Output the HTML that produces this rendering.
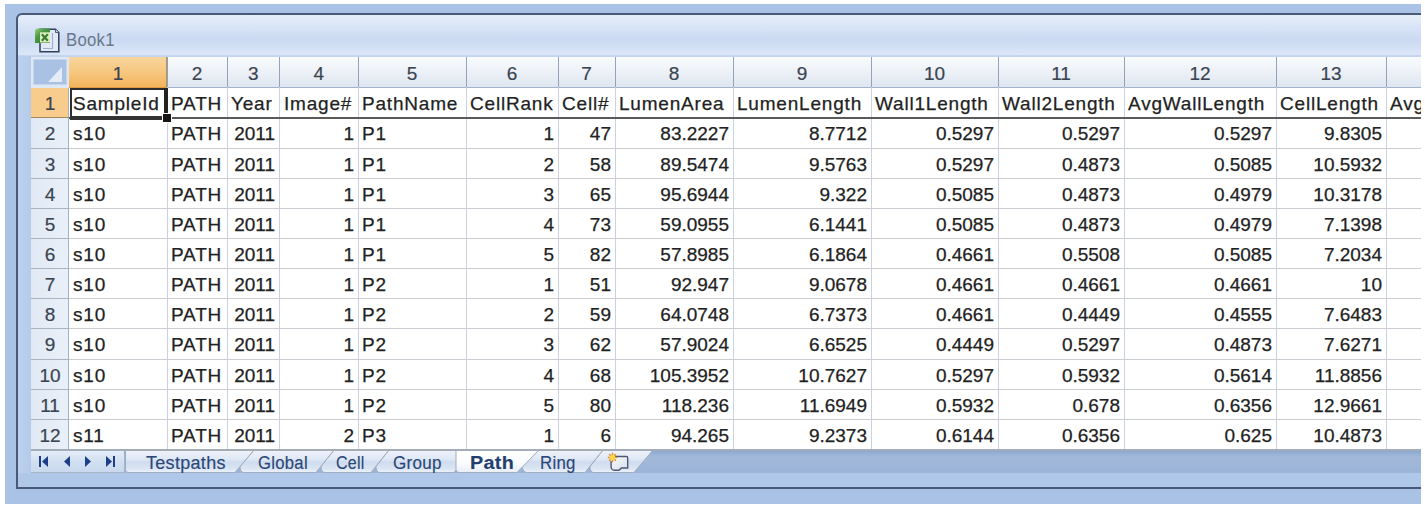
<!DOCTYPE html>
<html><head><meta charset="utf-8"><style>
*{margin:0;padding:0;box-sizing:border-box}
html,body{width:1425px;height:508px;overflow:hidden;background:#fff;font-family:"Liberation Sans",sans-serif}
.a{position:absolute}
.c{position:absolute;font-size:19px;line-height:19px;color:#222;white-space:nowrap;-webkit-text-stroke:0.25px #222}
.t{letter-spacing:0.8px}
.hd{position:absolute;font-size:19px;line-height:19px;color:#3b4451;text-align:center;white-space:nowrap;-webkit-text-stroke:0.2px #3b4451}
.tab{position:absolute;font-size:18px;line-height:18px;color:#2b4775;white-space:nowrap;letter-spacing:0.3px;-webkit-text-stroke:0.15px #2b4775}
</style></head><body>

<div class="a" style="left:5px;top:4px;width:1416px;height:500px;background:#a9c2e5"></div>
<div class="a" style="left:16px;top:13px;width:1420px;height:476px;background:#b9cfec;border:2px solid #48597a;border-radius:6px 0 0 0;box-shadow:inset 1px 1px 0 #d2e1f5"></div>
<div class="a" style="left:17.5px;top:14.5px;width:1410px;height:41px;border-radius:5px 0 0 0;background:linear-gradient(#e6eefa 0%,#d8e4f6 30%,#cbdaf2 60%,#dce7f7 100%)"></div>
<div class="a" style="left:17.5px;top:55px;width:1410px;height:2px;background:#c3d5ee"></div>
<div class="a" style="left:65.5px;top:30.7px;font-size:18px;line-height:18px;color:#6a778c;letter-spacing:0.3px;transform:scaleX(0.93);transform-origin:0 0">Book1</div>
<svg class="a" style="left:30px;top:24px" width="34" height="32" viewBox="0 0 34 32">
<path d="M10 5.2h15.5l3.3 3.3v19.3H10z" fill="#e2eaf6" stroke="#2f3f62" stroke-width="1.5"/>
<path d="M25.5 5.2v3.3h3.3" fill="#c8d6ea" stroke="#2f3f62" stroke-width="0.8"/>
<path d="M22.5 9v15M13 24.5h10" stroke="#9fb2d4" stroke-width="1.2"/>
<defs><linearGradient id="gg" x1="0" y1="0" x2="1" y2="1"><stop offset="0" stop-color="#9fd08a"/><stop offset="0.35" stop-color="#4c9c43"/><stop offset="1" stop-color="#2f6f2b"/></linearGradient></defs>
<path d="M8 4.6h12v14.4H5V7.6a3 3 0 0 1 3-3z" fill="url(#gg)"/>
<rect x="10" y="8.3" width="10" height="10.2" fill="#d9efbd"/>
<path d="M11.8 10.3l6 6.4M17.8 10.3l-6 6.4" stroke="#3a7a33" stroke-width="2.2"/>
</svg>
<div class="a" style="left:31px;top:57px;width:1394px;height:392px;background:#fff"></div>
<div class="a" style="left:69px;top:57px;width:1356px;height:31px;background:linear-gradient(#f9fbfd 0%,#eef2f8 45%,#dfe6f0 100%);border-bottom:1px solid #9fb3cb"></div>
<div class="a" style="left:69px;top:57px;width:98px;height:31px;background:linear-gradient(#f8d59e 0%,#f7c983 45%,#f3b45c 100%);border-bottom:1px solid #e29a3e"></div>
<div class="a" style="left:31px;top:57px;width:38px;height:31px;background:#dee8f5"></div>
<div class="a" style="left:33px;top:59px;width:34px;height:26px;background:#a9c1e2;border:1px solid #c4d5ec"></div>
<svg class="a" style="left:31px;top:57px" width="38" height="30"><path d="M31 10L31 25L17 25Z" fill="#eef3fa" opacity="0.85"/></svg>
<div class="hd" style="left:69px;top:64px;width:98px">1</div>
<div class="a" style="left:167px;top:57px;width:1px;height:30px;background:#93a3b8"></div>
<div class="hd" style="left:167px;top:64px;width:60px">2</div>
<div class="a" style="left:227px;top:57px;width:1px;height:30px;background:#93a3b8"></div>
<div class="hd" style="left:227px;top:64px;width:52.5px">3</div>
<div class="a" style="left:279px;top:57px;width:1px;height:30px;background:#93a3b8"></div>
<div class="hd" style="left:279.5px;top:64px;width:78.5px">4</div>
<div class="a" style="left:358px;top:57px;width:1px;height:30px;background:#93a3b8"></div>
<div class="hd" style="left:358px;top:64px;width:108px">5</div>
<div class="a" style="left:466px;top:57px;width:1px;height:30px;background:#93a3b8"></div>
<div class="hd" style="left:466px;top:64px;width:92px">6</div>
<div class="a" style="left:558px;top:57px;width:1px;height:30px;background:#93a3b8"></div>
<div class="hd" style="left:558px;top:64px;width:57px">7</div>
<div class="a" style="left:615px;top:57px;width:1px;height:30px;background:#93a3b8"></div>
<div class="hd" style="left:615px;top:64px;width:118px">8</div>
<div class="a" style="left:733px;top:57px;width:1px;height:30px;background:#93a3b8"></div>
<div class="hd" style="left:733px;top:64px;width:138px">9</div>
<div class="a" style="left:871px;top:57px;width:1px;height:30px;background:#93a3b8"></div>
<div class="hd" style="left:871px;top:64px;width:127px">10</div>
<div class="a" style="left:998px;top:57px;width:1px;height:30px;background:#93a3b8"></div>
<div class="hd" style="left:998px;top:64px;width:126px">11</div>
<div class="a" style="left:1124px;top:57px;width:1px;height:30px;background:#93a3b8"></div>
<div class="hd" style="left:1124px;top:64px;width:152px">12</div>
<div class="a" style="left:1276px;top:57px;width:1px;height:30px;background:#93a3b8"></div>
<div class="hd" style="left:1276px;top:64px;width:110px">13</div>
<div class="a" style="left:1386px;top:57px;width:1px;height:30px;background:#93a3b8"></div>
<div class="hd" style="left:1386px;top:64px;width:114px">14</div>
<div class="a" style="left:166px;top:57px;width:1px;height:30px;background:#b59160"></div>
<div class="a" style="left:31px;top:88px;width:38px;height:30px;background:#f8cc8d;border-bottom:1px solid #a8865a;border-right:1px solid #9eb3cc"></div>
<div class="hd" style="left:31px;top:93.5px;width:38px">1</div>
<div class="a" style="left:31px;top:118px;width:38px;height:31px;background:linear-gradient(90deg,#e0e9f5,#eaf0f8);border-bottom:1px solid #a9b4c3;border-right:1px solid #9eb3cc"></div>
<div class="hd" style="left:31px;top:123.5px;width:38px">2</div>
<div class="a" style="left:31px;top:149px;width:38px;height:30px;background:linear-gradient(90deg,#e0e9f5,#eaf0f8);border-bottom:1px solid #a9b4c3;border-right:1px solid #9eb3cc"></div>
<div class="hd" style="left:31px;top:154.5px;width:38px">3</div>
<div class="a" style="left:31px;top:179px;width:38px;height:30px;background:linear-gradient(90deg,#e0e9f5,#eaf0f8);border-bottom:1px solid #a9b4c3;border-right:1px solid #9eb3cc"></div>
<div class="hd" style="left:31px;top:184.5px;width:38px">4</div>
<div class="a" style="left:31px;top:209px;width:38px;height:30px;background:linear-gradient(90deg,#e0e9f5,#eaf0f8);border-bottom:1px solid #a9b4c3;border-right:1px solid #9eb3cc"></div>
<div class="hd" style="left:31px;top:214.5px;width:38px">5</div>
<div class="a" style="left:31px;top:239px;width:38px;height:30px;background:linear-gradient(90deg,#e0e9f5,#eaf0f8);border-bottom:1px solid #a9b4c3;border-right:1px solid #9eb3cc"></div>
<div class="hd" style="left:31px;top:244.5px;width:38px">6</div>
<div class="a" style="left:31px;top:269px;width:38px;height:30px;background:linear-gradient(90deg,#e0e9f5,#eaf0f8);border-bottom:1px solid #a9b4c3;border-right:1px solid #9eb3cc"></div>
<div class="hd" style="left:31px;top:274.5px;width:38px">7</div>
<div class="a" style="left:31px;top:299px;width:38px;height:30px;background:linear-gradient(90deg,#e0e9f5,#eaf0f8);border-bottom:1px solid #a9b4c3;border-right:1px solid #9eb3cc"></div>
<div class="hd" style="left:31px;top:304.5px;width:38px">8</div>
<div class="a" style="left:31px;top:329px;width:38px;height:31px;background:linear-gradient(90deg,#e0e9f5,#eaf0f8);border-bottom:1px solid #a9b4c3;border-right:1px solid #9eb3cc"></div>
<div class="hd" style="left:31px;top:334.5px;width:38px">9</div>
<div class="a" style="left:31px;top:360px;width:38px;height:30px;background:linear-gradient(90deg,#e0e9f5,#eaf0f8);border-bottom:1px solid #a9b4c3;border-right:1px solid #9eb3cc"></div>
<div class="hd" style="left:31px;top:365.5px;width:38px">10</div>
<div class="a" style="left:31px;top:390px;width:38px;height:30px;background:linear-gradient(90deg,#e0e9f5,#eaf0f8);border-bottom:1px solid #a9b4c3;border-right:1px solid #9eb3cc"></div>
<div class="hd" style="left:31px;top:395.5px;width:38px">11</div>
<div class="a" style="left:31px;top:420px;width:38px;height:30px;background:linear-gradient(90deg,#e0e9f5,#eaf0f8);border-bottom:1px solid #a9b4c3;border-right:1px solid #9eb3cc"></div>
<div class="hd" style="left:31px;top:425.5px;width:38px">12</div>
<div class="a" style="left:69px;top:117px;width:1356px;height:1px;background:#cbcdd3"></div>
<div class="a" style="left:69px;top:148px;width:1356px;height:1px;background:#cbcdd3"></div>
<div class="a" style="left:69px;top:178px;width:1356px;height:1px;background:#cbcdd3"></div>
<div class="a" style="left:69px;top:208px;width:1356px;height:1px;background:#cbcdd3"></div>
<div class="a" style="left:69px;top:238px;width:1356px;height:1px;background:#cbcdd3"></div>
<div class="a" style="left:69px;top:268px;width:1356px;height:1px;background:#cbcdd3"></div>
<div class="a" style="left:69px;top:298px;width:1356px;height:1px;background:#cbcdd3"></div>
<div class="a" style="left:69px;top:328px;width:1356px;height:1px;background:#cbcdd3"></div>
<div class="a" style="left:69px;top:359px;width:1356px;height:1px;background:#cbcdd3"></div>
<div class="a" style="left:69px;top:389px;width:1356px;height:1px;background:#cbcdd3"></div>
<div class="a" style="left:69px;top:419px;width:1356px;height:1px;background:#cbcdd3"></div>
<div class="a" style="left:167px;top:87px;width:1px;height:362px;background:#c9d1e2"></div>
<div class="a" style="left:227px;top:87px;width:1px;height:362px;background:#c9d1e2"></div>
<div class="a" style="left:279px;top:87px;width:1px;height:362px;background:#c9d1e2"></div>
<div class="a" style="left:358px;top:87px;width:1px;height:362px;background:#c9d1e2"></div>
<div class="a" style="left:466px;top:87px;width:1px;height:362px;background:#c9d1e2"></div>
<div class="a" style="left:558px;top:87px;width:1px;height:362px;background:#c9d1e2"></div>
<div class="a" style="left:615px;top:87px;width:1px;height:362px;background:#c9d1e2"></div>
<div class="a" style="left:733px;top:87px;width:1px;height:362px;background:#c9d1e2"></div>
<div class="a" style="left:871px;top:87px;width:1px;height:362px;background:#c9d1e2"></div>
<div class="a" style="left:998px;top:87px;width:1px;height:362px;background:#c9d1e2"></div>
<div class="a" style="left:1124px;top:87px;width:1px;height:362px;background:#c9d1e2"></div>
<div class="a" style="left:1276px;top:87px;width:1px;height:362px;background:#c9d1e2"></div>
<div class="a" style="left:1386px;top:87px;width:1px;height:362px;background:#c9d1e2"></div>
<div class="a" style="left:69px;top:117px;width:1356px;height:2px;background:#5a5a5a"></div>
<div class="c t" style="left:73px;top:93.5px">SampleId</div>
<div class="c t" style="left:171px;top:93.5px">PATH</div>
<div class="c t" style="left:231px;top:93.5px">Year</div>
<div class="c t" style="left:284px;top:93.5px">Image#</div>
<div class="c t" style="left:362px;top:93.5px">PathName</div>
<div class="c t" style="left:470px;top:93.5px">CellRank</div>
<div class="c t" style="left:562px;top:93.5px">Cell#</div>
<div class="c t" style="left:619px;top:93.5px">LumenArea</div>
<div class="c t" style="left:737px;top:93.5px">LumenLength</div>
<div class="c t" style="left:875px;top:93.5px">Wall1Length</div>
<div class="c t" style="left:1002px;top:93.5px">Wall2Length</div>
<div class="c t" style="left:1128px;top:93.5px">AvgWallLength</div>
<div class="c t" style="left:1280px;top:93.5px">CellLength</div>
<div class="c t" style="left:1390px;top:93.5px">AvgCellWidth</div>
<div class="c t" style="left:73px;top:123.5px">s10</div>
<div class="c t" style="left:171px;top:123.5px">PATH</div>
<div class="c" style="left:227px;top:123.5px;width:48px;text-align:right">2011</div>
<div class="c" style="left:280px;top:123.5px;width:74px;text-align:right">1</div>
<div class="c t" style="left:362px;top:123.5px">P1</div>
<div class="c" style="left:466px;top:123.5px;width:88px;text-align:right">1</div>
<div class="c" style="left:558px;top:123.5px;width:53px;text-align:right">47</div>
<div class="c" style="left:615px;top:123.5px;width:114px;text-align:right">83.2227</div>
<div class="c" style="left:733px;top:123.5px;width:134px;text-align:right">8.7712</div>
<div class="c" style="left:871px;top:123.5px;width:123px;text-align:right">0.5297</div>
<div class="c" style="left:998px;top:123.5px;width:122px;text-align:right">0.5297</div>
<div class="c" style="left:1124px;top:123.5px;width:148px;text-align:right">0.5297</div>
<div class="c" style="left:1276px;top:123.5px;width:106px;text-align:right">9.8305</div>
<div class="c t" style="left:73px;top:154.5px">s10</div>
<div class="c t" style="left:171px;top:154.5px">PATH</div>
<div class="c" style="left:227px;top:154.5px;width:48px;text-align:right">2011</div>
<div class="c" style="left:280px;top:154.5px;width:74px;text-align:right">1</div>
<div class="c t" style="left:362px;top:154.5px">P1</div>
<div class="c" style="left:466px;top:154.5px;width:88px;text-align:right">2</div>
<div class="c" style="left:558px;top:154.5px;width:53px;text-align:right">58</div>
<div class="c" style="left:615px;top:154.5px;width:114px;text-align:right">89.5474</div>
<div class="c" style="left:733px;top:154.5px;width:134px;text-align:right">9.5763</div>
<div class="c" style="left:871px;top:154.5px;width:123px;text-align:right">0.5297</div>
<div class="c" style="left:998px;top:154.5px;width:122px;text-align:right">0.4873</div>
<div class="c" style="left:1124px;top:154.5px;width:148px;text-align:right">0.5085</div>
<div class="c" style="left:1276px;top:154.5px;width:106px;text-align:right">10.5932</div>
<div class="c t" style="left:73px;top:184.5px">s10</div>
<div class="c t" style="left:171px;top:184.5px">PATH</div>
<div class="c" style="left:227px;top:184.5px;width:48px;text-align:right">2011</div>
<div class="c" style="left:280px;top:184.5px;width:74px;text-align:right">1</div>
<div class="c t" style="left:362px;top:184.5px">P1</div>
<div class="c" style="left:466px;top:184.5px;width:88px;text-align:right">3</div>
<div class="c" style="left:558px;top:184.5px;width:53px;text-align:right">65</div>
<div class="c" style="left:615px;top:184.5px;width:114px;text-align:right">95.6944</div>
<div class="c" style="left:733px;top:184.5px;width:134px;text-align:right">9.322</div>
<div class="c" style="left:871px;top:184.5px;width:123px;text-align:right">0.5085</div>
<div class="c" style="left:998px;top:184.5px;width:122px;text-align:right">0.4873</div>
<div class="c" style="left:1124px;top:184.5px;width:148px;text-align:right">0.4979</div>
<div class="c" style="left:1276px;top:184.5px;width:106px;text-align:right">10.3178</div>
<div class="c t" style="left:73px;top:214.5px">s10</div>
<div class="c t" style="left:171px;top:214.5px">PATH</div>
<div class="c" style="left:227px;top:214.5px;width:48px;text-align:right">2011</div>
<div class="c" style="left:280px;top:214.5px;width:74px;text-align:right">1</div>
<div class="c t" style="left:362px;top:214.5px">P1</div>
<div class="c" style="left:466px;top:214.5px;width:88px;text-align:right">4</div>
<div class="c" style="left:558px;top:214.5px;width:53px;text-align:right">73</div>
<div class="c" style="left:615px;top:214.5px;width:114px;text-align:right">59.0955</div>
<div class="c" style="left:733px;top:214.5px;width:134px;text-align:right">6.1441</div>
<div class="c" style="left:871px;top:214.5px;width:123px;text-align:right">0.5085</div>
<div class="c" style="left:998px;top:214.5px;width:122px;text-align:right">0.4873</div>
<div class="c" style="left:1124px;top:214.5px;width:148px;text-align:right">0.4979</div>
<div class="c" style="left:1276px;top:214.5px;width:106px;text-align:right">7.1398</div>
<div class="c t" style="left:73px;top:244.5px">s10</div>
<div class="c t" style="left:171px;top:244.5px">PATH</div>
<div class="c" style="left:227px;top:244.5px;width:48px;text-align:right">2011</div>
<div class="c" style="left:280px;top:244.5px;width:74px;text-align:right">1</div>
<div class="c t" style="left:362px;top:244.5px">P1</div>
<div class="c" style="left:466px;top:244.5px;width:88px;text-align:right">5</div>
<div class="c" style="left:558px;top:244.5px;width:53px;text-align:right">82</div>
<div class="c" style="left:615px;top:244.5px;width:114px;text-align:right">57.8985</div>
<div class="c" style="left:733px;top:244.5px;width:134px;text-align:right">6.1864</div>
<div class="c" style="left:871px;top:244.5px;width:123px;text-align:right">0.4661</div>
<div class="c" style="left:998px;top:244.5px;width:122px;text-align:right">0.5508</div>
<div class="c" style="left:1124px;top:244.5px;width:148px;text-align:right">0.5085</div>
<div class="c" style="left:1276px;top:244.5px;width:106px;text-align:right">7.2034</div>
<div class="c t" style="left:73px;top:274.5px">s10</div>
<div class="c t" style="left:171px;top:274.5px">PATH</div>
<div class="c" style="left:227px;top:274.5px;width:48px;text-align:right">2011</div>
<div class="c" style="left:280px;top:274.5px;width:74px;text-align:right">1</div>
<div class="c t" style="left:362px;top:274.5px">P2</div>
<div class="c" style="left:466px;top:274.5px;width:88px;text-align:right">1</div>
<div class="c" style="left:558px;top:274.5px;width:53px;text-align:right">51</div>
<div class="c" style="left:615px;top:274.5px;width:114px;text-align:right">92.947</div>
<div class="c" style="left:733px;top:274.5px;width:134px;text-align:right">9.0678</div>
<div class="c" style="left:871px;top:274.5px;width:123px;text-align:right">0.4661</div>
<div class="c" style="left:998px;top:274.5px;width:122px;text-align:right">0.4661</div>
<div class="c" style="left:1124px;top:274.5px;width:148px;text-align:right">0.4661</div>
<div class="c" style="left:1276px;top:274.5px;width:106px;text-align:right">10</div>
<div class="c t" style="left:73px;top:304.5px">s10</div>
<div class="c t" style="left:171px;top:304.5px">PATH</div>
<div class="c" style="left:227px;top:304.5px;width:48px;text-align:right">2011</div>
<div class="c" style="left:280px;top:304.5px;width:74px;text-align:right">1</div>
<div class="c t" style="left:362px;top:304.5px">P2</div>
<div class="c" style="left:466px;top:304.5px;width:88px;text-align:right">2</div>
<div class="c" style="left:558px;top:304.5px;width:53px;text-align:right">59</div>
<div class="c" style="left:615px;top:304.5px;width:114px;text-align:right">64.0748</div>
<div class="c" style="left:733px;top:304.5px;width:134px;text-align:right">6.7373</div>
<div class="c" style="left:871px;top:304.5px;width:123px;text-align:right">0.4661</div>
<div class="c" style="left:998px;top:304.5px;width:122px;text-align:right">0.4449</div>
<div class="c" style="left:1124px;top:304.5px;width:148px;text-align:right">0.4555</div>
<div class="c" style="left:1276px;top:304.5px;width:106px;text-align:right">7.6483</div>
<div class="c t" style="left:73px;top:334.5px">s10</div>
<div class="c t" style="left:171px;top:334.5px">PATH</div>
<div class="c" style="left:227px;top:334.5px;width:48px;text-align:right">2011</div>
<div class="c" style="left:280px;top:334.5px;width:74px;text-align:right">1</div>
<div class="c t" style="left:362px;top:334.5px">P2</div>
<div class="c" style="left:466px;top:334.5px;width:88px;text-align:right">3</div>
<div class="c" style="left:558px;top:334.5px;width:53px;text-align:right">62</div>
<div class="c" style="left:615px;top:334.5px;width:114px;text-align:right">57.9024</div>
<div class="c" style="left:733px;top:334.5px;width:134px;text-align:right">6.6525</div>
<div class="c" style="left:871px;top:334.5px;width:123px;text-align:right">0.4449</div>
<div class="c" style="left:998px;top:334.5px;width:122px;text-align:right">0.5297</div>
<div class="c" style="left:1124px;top:334.5px;width:148px;text-align:right">0.4873</div>
<div class="c" style="left:1276px;top:334.5px;width:106px;text-align:right">7.6271</div>
<div class="c t" style="left:73px;top:365.5px">s10</div>
<div class="c t" style="left:171px;top:365.5px">PATH</div>
<div class="c" style="left:227px;top:365.5px;width:48px;text-align:right">2011</div>
<div class="c" style="left:280px;top:365.5px;width:74px;text-align:right">1</div>
<div class="c t" style="left:362px;top:365.5px">P2</div>
<div class="c" style="left:466px;top:365.5px;width:88px;text-align:right">4</div>
<div class="c" style="left:558px;top:365.5px;width:53px;text-align:right">68</div>
<div class="c" style="left:615px;top:365.5px;width:114px;text-align:right">105.3952</div>
<div class="c" style="left:733px;top:365.5px;width:134px;text-align:right">10.7627</div>
<div class="c" style="left:871px;top:365.5px;width:123px;text-align:right">0.5297</div>
<div class="c" style="left:998px;top:365.5px;width:122px;text-align:right">0.5932</div>
<div class="c" style="left:1124px;top:365.5px;width:148px;text-align:right">0.5614</div>
<div class="c" style="left:1276px;top:365.5px;width:106px;text-align:right">11.8856</div>
<div class="c t" style="left:73px;top:395.5px">s10</div>
<div class="c t" style="left:171px;top:395.5px">PATH</div>
<div class="c" style="left:227px;top:395.5px;width:48px;text-align:right">2011</div>
<div class="c" style="left:280px;top:395.5px;width:74px;text-align:right">1</div>
<div class="c t" style="left:362px;top:395.5px">P2</div>
<div class="c" style="left:466px;top:395.5px;width:88px;text-align:right">5</div>
<div class="c" style="left:558px;top:395.5px;width:53px;text-align:right">80</div>
<div class="c" style="left:615px;top:395.5px;width:114px;text-align:right">118.236</div>
<div class="c" style="left:733px;top:395.5px;width:134px;text-align:right">11.6949</div>
<div class="c" style="left:871px;top:395.5px;width:123px;text-align:right">0.5932</div>
<div class="c" style="left:998px;top:395.5px;width:122px;text-align:right">0.678</div>
<div class="c" style="left:1124px;top:395.5px;width:148px;text-align:right">0.6356</div>
<div class="c" style="left:1276px;top:395.5px;width:106px;text-align:right">12.9661</div>
<div class="c t" style="left:73px;top:425.5px">s11</div>
<div class="c t" style="left:171px;top:425.5px">PATH</div>
<div class="c" style="left:227px;top:425.5px;width:48px;text-align:right">2011</div>
<div class="c" style="left:280px;top:425.5px;width:74px;text-align:right">2</div>
<div class="c t" style="left:362px;top:425.5px">P3</div>
<div class="c" style="left:466px;top:425.5px;width:88px;text-align:right">1</div>
<div class="c" style="left:558px;top:425.5px;width:53px;text-align:right">6</div>
<div class="c" style="left:615px;top:425.5px;width:114px;text-align:right">94.265</div>
<div class="c" style="left:733px;top:425.5px;width:134px;text-align:right">9.2373</div>
<div class="c" style="left:871px;top:425.5px;width:123px;text-align:right">0.6144</div>
<div class="c" style="left:998px;top:425.5px;width:122px;text-align:right">0.6356</div>
<div class="c" style="left:1124px;top:425.5px;width:148px;text-align:right">0.625</div>
<div class="c" style="left:1276px;top:425.5px;width:106px;text-align:right">10.4873</div>
<div class="a" style="left:70px;top:88px;width:98px;height:2px;background:#2e2e2e"></div>
<div class="a" style="left:70px;top:88px;width:2px;height:31px;background:#2e2e2e"></div>
<div class="a" style="left:164px;top:88px;width:4px;height:26px;background:#222"></div>
<div class="a" style="left:70px;top:116px;width:93px;height:4px;background:#333"></div>
<div class="a" style="left:162px;top:112.5px;width:10px;height:10px;background:#fff"></div>
<div class="a" style="left:163px;top:113.5px;width:8px;height:8px;background:#151515"></div>
<div class="a" style="left:31px;top:450px;width:1394px;height:23px;background:linear-gradient(#8aa6cf 0%,#a2b9da 30%,#9bb3d7 100%)"></div>
<div class="a" style="left:31px;top:450px;width:93px;height:23px;background:linear-gradient(#e6eef9,#d3e0f2 50%,#c9d8ee);border-bottom:1.5px solid #a7b3c3"></div>
<svg class="a" style="left:38px;top:455px" width="80" height="13" viewBox="0 0 80 13">
<rect x="1" y="1" width="2" height="11" fill="#1d3f8a"/><path d="M10 1v11L4 6.5z" fill="#1d3f8a"/>
<path d="M32 1v11L26 6.5z" fill="#1d3f8a"/>
<path d="M47 1v11L53 6.5z" fill="#1d3f8a"/>
<path d="M68 1v11L74 6.5z" fill="#1d3f8a"/><rect x="75" y="1" width="2" height="11" fill="#1d3f8a"/>
</svg>
<svg class="a" style="left:0;top:449px" width="700" height="26" viewBox="0 449 700 26"><defs><linearGradient id="tg" x1="0" y1="0" x2="0" y2="1"><stop offset="0" stop-color="#f0f4fa"/><stop offset="0.4" stop-color="#dfe8f5"/><stop offset="0.55" stop-color="#cfdcef"/><stop offset="0.85" stop-color="#dce6f4"/><stop offset="1" stop-color="#eef3fa"/></linearGradient><linearGradient id="ta" x1="0" y1="0" x2="0" y2="1"><stop offset="0" stop-color="#ffffff"/><stop offset="0.6" stop-color="#fafbfd"/><stop offset="1" stop-color="#e8eef6"/></linearGradient></defs><path d="M603 450 L590 466.5 Q590 472.5 594 472.5 L634 472.5 L653 450" fill="url(#tg)" stroke="#a0adbf" stroke-width="1"/><path d="M539 450 L522 466.5 Q523 472.5 527 472.5 L585 472.5 L603 450" fill="url(#tg)" stroke="#a0adbf" stroke-width="1"/><path d="M389 450 L376 466.5 Q376 472.5 380 472.5 L454 472.5 L472 450" fill="url(#tg)" stroke="#a0adbf" stroke-width="1"/><path d="M334 450 L321 466.5 Q321 472.5 325 472.5 L371 472.5 L389 450" fill="url(#tg)" stroke="#a0adbf" stroke-width="1"/><path d="M254 450 L240 466.5 Q240 472.5 244 472.5 L316 472.5 L334 450" fill="url(#tg)" stroke="#a0adbf" stroke-width="1"/><path d="M125.5 450 L125.5 469.5 Q125.5 472.5 128.5 472.5 L235 472.5 L254 450" fill="url(#tg)" stroke="#a0adbf" stroke-width="1"/><path d="M456 450 L456 469.5 Q456 472.5 459 472.5 L517 472.5 L539 450" fill="url(#ta)" stroke="#a0adbf" stroke-width="1"/></svg>
<div class="tab" style="left:146px;top:454px;transform:scaleX(1.0);transform-origin:0 0;">Testpaths</div>
<div class="tab" style="left:258px;top:454px;transform:scaleX(0.927);transform-origin:0 0;">Global</div>
<div class="tab" style="left:336px;top:454px;transform:scaleX(0.89);transform-origin:0 0;">Cell</div>
<div class="tab" style="left:393px;top:454px;transform:scaleX(0.946);transform-origin:0 0;">Group</div>
<div class="tab" style="left:470px;top:454px;transform:scaleX(1.097);transform-origin:0 0;font-weight:bold;color:#233f70">Path</div>
<div class="tab" style="left:540px;top:454px;transform:scaleX(0.936);transform-origin:0 0;">Ring</div>
<svg class="a" style="left:604px;top:452px" width="28" height="22" viewBox="0 0 28 22">
<defs><linearGradient id="pg" x1="0" y1="0" x2="1" y2="1"><stop offset="0" stop-color="#fbfcfe"/><stop offset="1" stop-color="#d5dde9"/></linearGradient></defs>
<path d="M9 4.5h13.2a1.5 1.5 0 0 1 1.5 1.5V16h-6c-1.2 0-1.6 2.3-3.2 2.3h-3.8a3.6 3.6 0 0 1-3.6-3.6V9" fill="url(#pg)" stroke="#4d5872" stroke-width="1.4"/>
<path d="M8.5 0.8v9.4M3.8 5.5h9.4M5.2 2.2l6.6 6.6M11.8 2.2l-6.6 6.6" stroke="#e0902a" stroke-width="1.6"/>
<circle cx="8.5" cy="5.5" r="2.8" fill="#ffd54a"/>
</svg>
<div class="a" style="left:31px;top:449.3px;width:1394px;height:1.4px;background:#a3adba"></div>
<div class="a" style="left:17.5px;top:473px;width:1410px;height:14px;background:#afc7e8"></div>
<div class="a" style="left:17.5px;top:56px;width:13.5px;height:417px;background:linear-gradient(90deg,#bdd1ee,#b4cbea)"></div>
<div class="a" style="left:1421px;top:0;width:4px;height:508px;background:#fff"></div>
</body></html>
